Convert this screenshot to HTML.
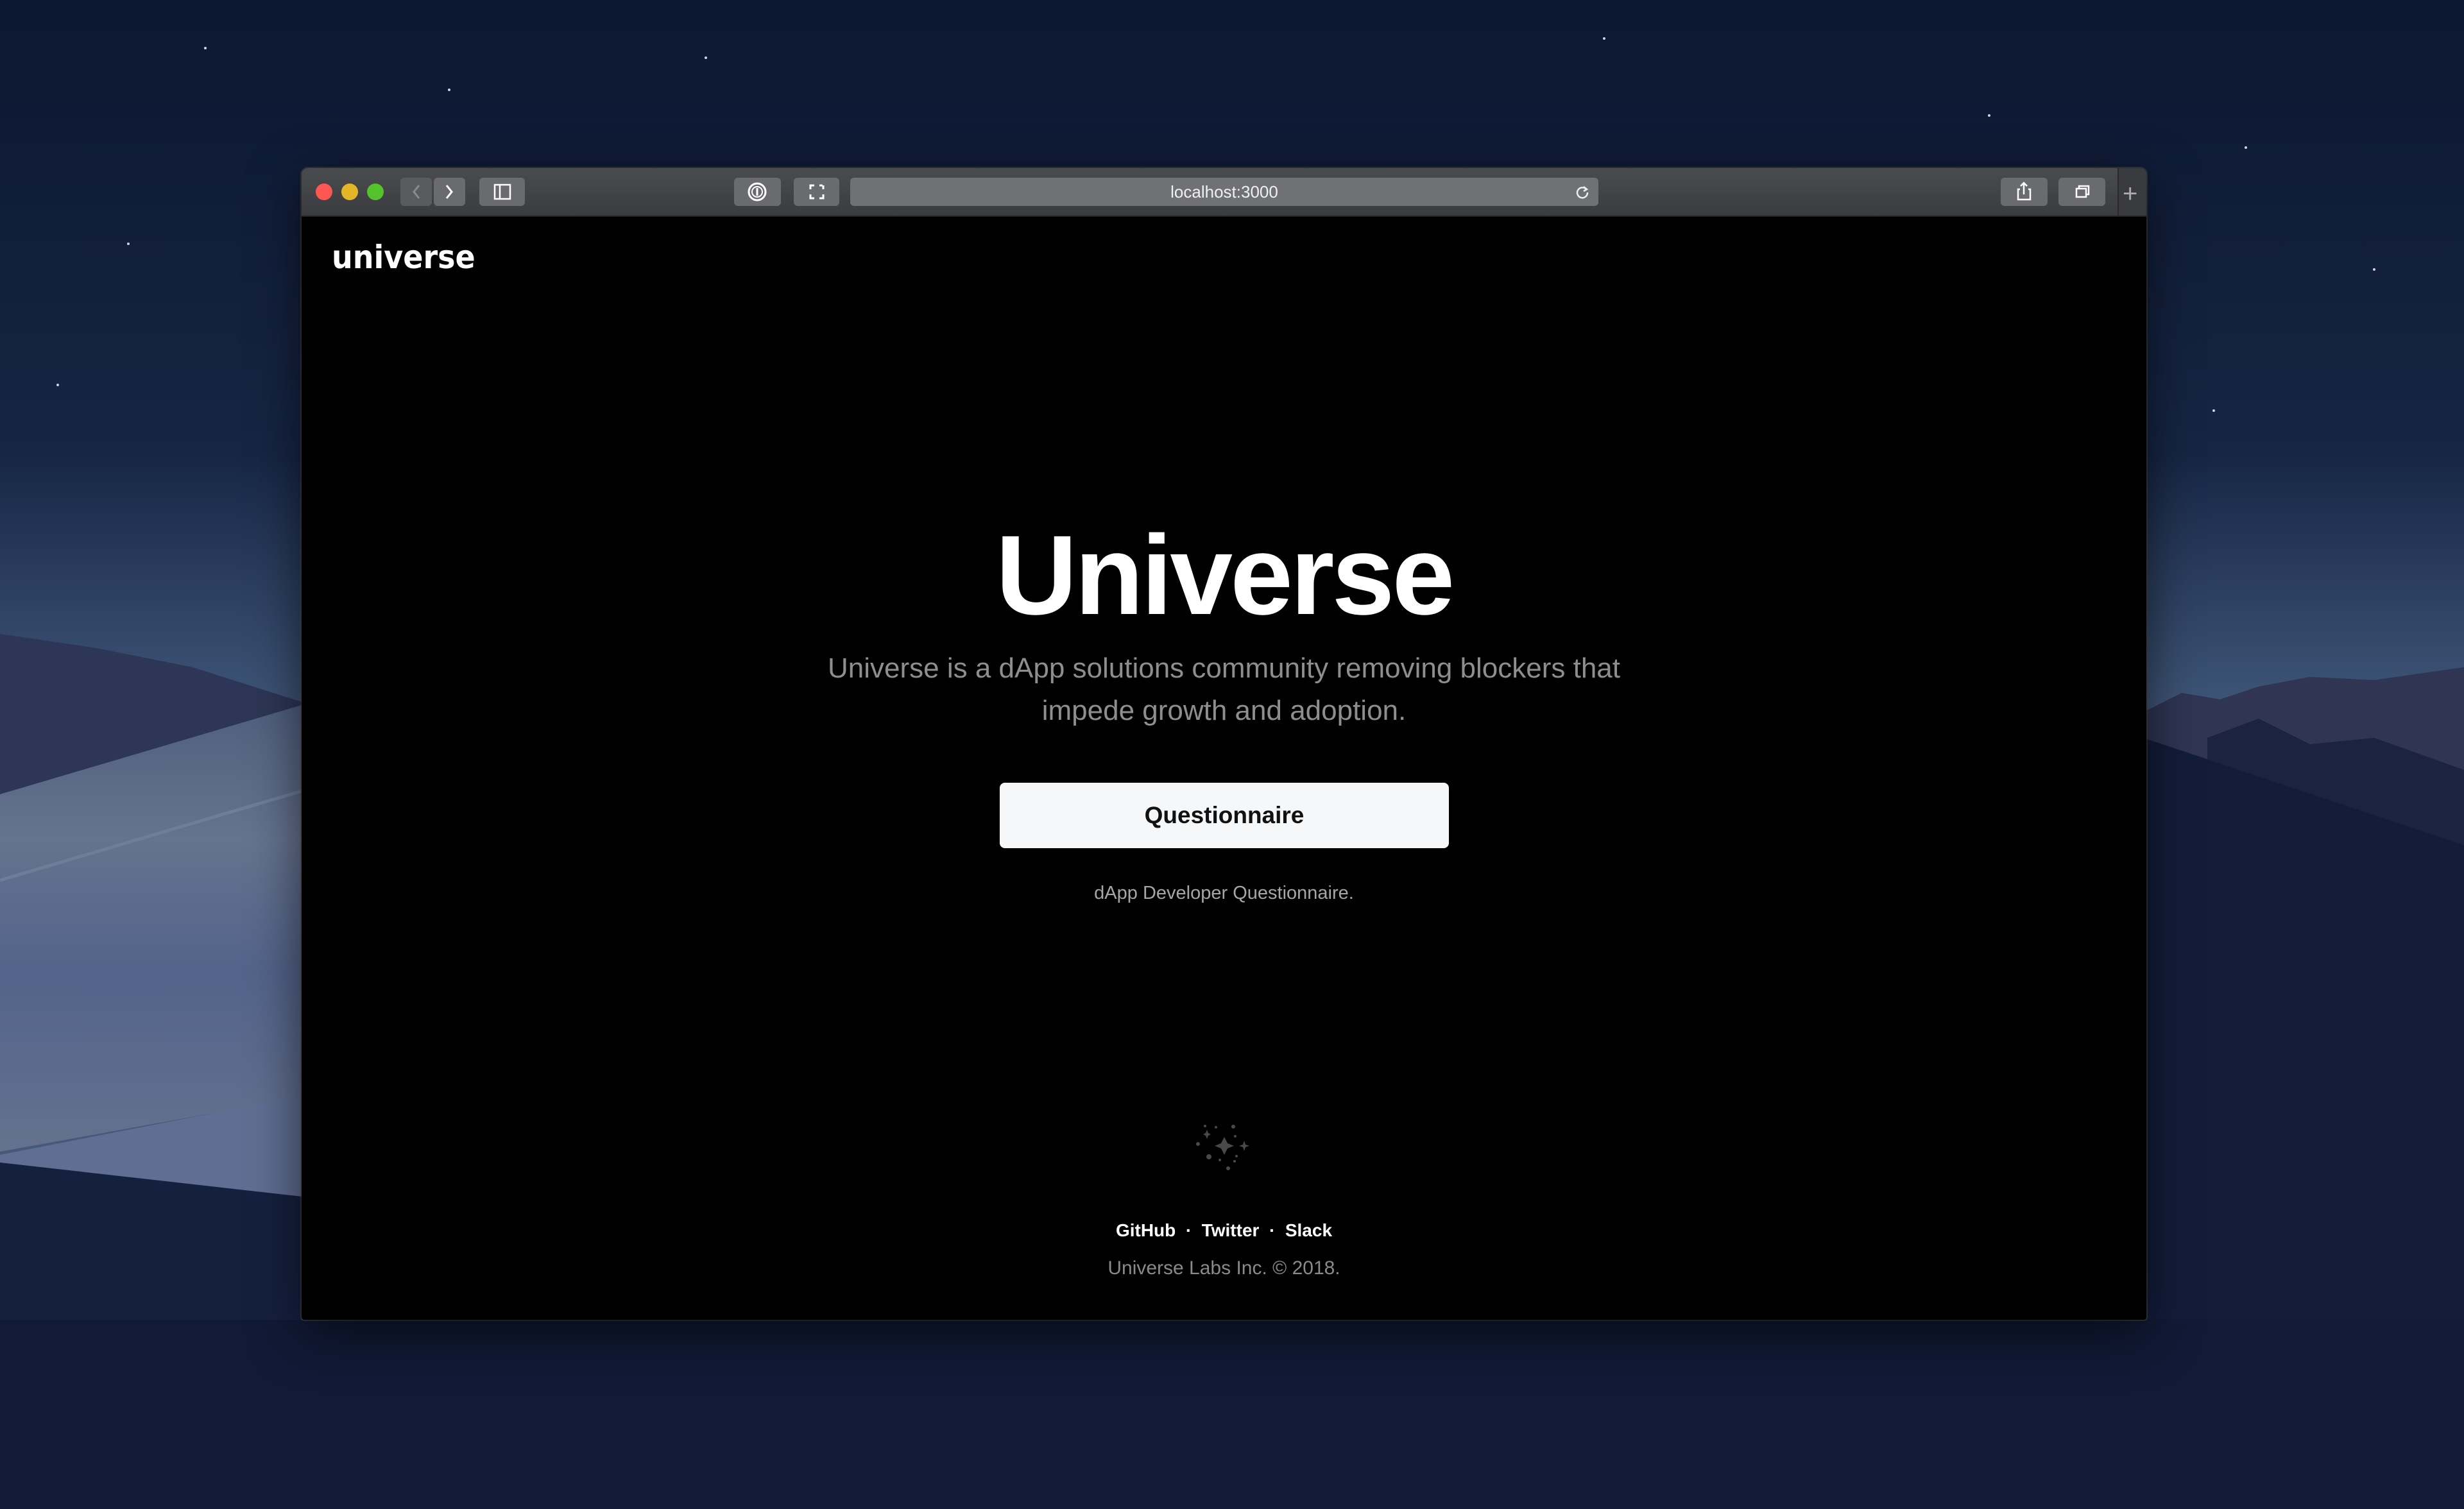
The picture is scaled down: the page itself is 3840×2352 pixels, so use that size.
<!DOCTYPE html>
<html><head><meta charset="utf-8"><style>
html,body{margin:0;padding:0;width:3840px;height:2352px;overflow:hidden;background:#0e1830;font-family:"Liberation Sans",sans-serif}
.bg{position:absolute;left:0;top:0}
.win{position:absolute;left:470px;top:262px;width:2875px;height:1795px;background:#000;border-radius:10px 10px 4px 4px;overflow:hidden;box-shadow:0 20px 80px rgba(0,0,0,.6),0 0 0 2px rgba(80,80,80,.5)}
.tb{position:absolute;left:0;top:0;width:100%;height:74px;background:linear-gradient(#4a4b4e,#3b3c3f);border-bottom:2px solid #222}
.btn{position:absolute;top:15px;height:44px;background:#6a6b6e;border-radius:6px}
.url{position:absolute;left:855px;top:15px;width:1166px;height:44px;background:#707174;border-radius:6px;color:#f0f0f0;font-size:26px;text-align:center;line-height:44px}
.c{position:absolute;left:0;width:100%;text-align:center}
</style></head><body>
<svg class="bg" width="3840" height="2352" viewBox="0 0 3840 2352">
<defs>
<linearGradient id="sky" x1="0" y1="0" x2="0" y2="1"><stop offset="0" stop-color="#0c1730"/><stop offset=".3" stop-color="#162544"/><stop offset=".47" stop-color="#3f5678"/><stop offset=".55" stop-color="#46597a"/></linearGradient>
<linearGradient id="dune" x1="0" y1="0" x2="0" y2="1"><stop offset="0" stop-color="#505f7e"/><stop offset=".3" stop-color="#65738f"/><stop offset=".6" stop-color="#53638a"/><stop offset="1" stop-color="#64728f"/></linearGradient>
</defs>
<rect width="3840" height="2352" fill="url(#sky)"/>
<path d="M0 988 L150 1010 300 1040 470 1094 L470 1250 0 1300Z" fill="#2d3656"/>
<path d="M3340 1110 L3400 1080 3460 1090 3520 1070 3600 1055 3700 1060 3840 1040 L3840 1400 3340 1400Z" fill="#2f3553"/>
<path d="M3440 1150 L3520 1120 3600 1160 3700 1150 3840 1200 L3840 1400 3440 1400Z" fill="#1b2340"/>
<path d="M0 1238 L470 1099 L470 1710 0 1795Z" fill="url(#dune)"/>
<path d="M0 1372 L470 1233" stroke="#6f7d98" stroke-width="5"/>
<path d="M0 1800 L470 1708 L470 1865 0 1812Z" fill="#5f6e92"/>
<path d="M0 1812 L470 1865 L470 2352 0 2352Z" fill="#15203f"/>
<path d="M3340 1150 L3840 1317 L3840 2352 3340 2352Z" fill="#131c3a"/>
<rect x="0" y="2057" width="3840" height="295" fill="#111a36"/>
<g fill="#cfd6e4"><circle cx="320" cy="75" r="2"/><circle cx="700" cy="140" r="2"/><circle cx="1100" cy="90" r="2"/><circle cx="2500" cy="60" r="2"/><circle cx="3100" cy="180" r="2"/><circle cx="3500" cy="230" r="2"/><circle cx="3700" cy="420" r="2"/><circle cx="200" cy="380" r="2"/><circle cx="3450" cy="640" r="2"/><circle cx="90" cy="600" r="2"/></g>
</svg>
<div class="win">
 <div class="tb">
  <div style="position:absolute;left:22px;top:24px;width:26px;height:26px;border-radius:50%;background:#fc5753"></div>
  <div style="position:absolute;left:62px;top:24px;width:26px;height:26px;border-radius:50%;background:#e4b527"></div>
  <div style="position:absolute;left:102px;top:24px;width:26px;height:26px;border-radius:50%;background:#53c22b"></div>
  <div class="btn" style="left:154px;width:49px;background:#5a5b5e"></div>
  <div class="btn" style="left:206px;width:49px"></div>
  <svg style="position:absolute;left:154px;top:15px" width="101" height="44"><path d="M29 12 L21 22 L29 32" stroke="#8a8b8e" stroke-width="3" fill="none"/><path d="M72 12 L80 22 L72 32" stroke="#fff" stroke-width="3" fill="none"/></svg>
  <div class="btn" style="left:277px;width:71px"></div>
  <svg style="position:absolute;left:277px;top:15px" width="71" height="44"><rect x="24" y="11" width="24" height="22" stroke="#fff" stroke-width="2.5" fill="none"/><line x1="32" y1="11" x2="32" y2="33" stroke="#fff" stroke-width="2.5"/></svg>
  <div class="btn" style="left:674px;width:73px"></div>
  <svg style="position:absolute;left:674px;top:15px" width="73" height="44"><circle cx="36" cy="22" r="13" stroke="#fff" stroke-width="3" fill="none"/><circle cx="36" cy="22" r="8" stroke="#fff" stroke-width="2" fill="none"/><line x1="36" y1="16" x2="36" y2="28" stroke="#fff" stroke-width="3"/></svg>
  <div class="btn" style="left:767px;width:71px"></div>
  <svg style="position:absolute;left:767px;top:15px" width="71" height="44" stroke="#fff" stroke-width="3" fill="none"><path d="M26 18V12H32M45 12H40M46 12V18M26 26V32H32M46 26V32H40"/></svg>
  <div class="url">localhost:3000</div>
  <svg style="position:absolute;left:1984px;top:25px" width="24" height="24"><path d="M18 8 A8 8 0 1 0 20 13" stroke="#eee" stroke-width="2.5" fill="none"/><path d="M14 4 L19 8 L14 11" stroke="#eee" stroke-width="2.5" fill="none"/></svg>
  <div class="btn" style="left:2648px;width:73px"></div>
  <svg style="position:absolute;left:2648px;top:15px" width="73" height="44" stroke="#fff" stroke-width="2.5" fill="none"><path d="M30 18H27V34H46V18H43M36 26V8M31 13L36 8L41 13"/></svg>
  <div class="btn" style="left:2738px;width:73px"></div>
  <svg style="position:absolute;left:2738px;top:15px" width="73" height="44" stroke="#fff" stroke-width="2.5" fill="none"><rect x="28" y="17" width="15" height="13"/><path d="M32 17V13H47V26H43"/></svg>
  <div style="position:absolute;left:2830px;top:0;width:45px;height:74px;border-left:2px solid #2a2a2c;background:#3a3b3e"></div>
  <div style="position:absolute;left:2838px;top:18px;color:#aaa;font-size:40px;line-height:44px">+</div>
 </div>
 <div style="position:absolute;left:47px;top:110px;color:#fff;font-size:50px;font-family:'DejaVu Sans',sans-serif;font-weight:bold;transform:scaleX(.92);transform-origin:left">universe</div>
 <div class="c" style="top:525px;color:#fff;font-size:176px;font-weight:bold;letter-spacing:-4px;line-height:220px">Universe</div>
 <div class="c" style="top:747px;color:#8e8e8e;font-size:44px;line-height:66px">Universe is a dApp solutions community removing blockers that<br>impede growth and adoption.</div>
 <div style="position:absolute;left:1088px;top:958px;width:700px;height:102px;background:#f6f7f9;border-radius:8px;color:#111;font-size:37px;font-weight:bold;text-align:center;line-height:102px">Questionnaire</div>
 <div class="c" style="top:1114px;color:#a6a6a6;font-size:29px">dApp Developer Questionnaire.</div>
 <svg style="position:absolute;left:1393px;top:1490px" width="90" height="80" fill="#4a4a4a"><path d="M45 20 L50 30 L60 34 L50 38 L45 48 L40 38 L30 34 L40 30Z"/><path d="M76 26L78 32 84 34 78 36 76 42 74 36 68 34 74 32Z"/><path d="M18 9L20 14 24 16 20 18 18 23 16 18 12 16 16 14Z"/><circle cx="59" cy="4" r="3"/><circle cx="4" cy="31" r="3"/><circle cx="21" cy="51" r="4"/><circle cx="51" cy="69" r="3"/><circle cx="61" cy="58" r="2"/><circle cx="62" cy="19" r="2"/><circle cx="15" cy="3" r="2"/><circle cx="32" cy="5" r="2"/><circle cx="38" cy="56" r="2"/><circle cx="64" cy="50" r="2"/></svg>
 <div class="c" style="top:1640px;color:#fff;font-size:28px;font-weight:bold">GitHub &nbsp;·&nbsp; Twitter &nbsp;·&nbsp; Slack</div>
 <div class="c" style="top:1698px;color:#8a8a8a;font-size:30px">Universe Labs Inc. © 2018.</div>
</div>
</body></html>
